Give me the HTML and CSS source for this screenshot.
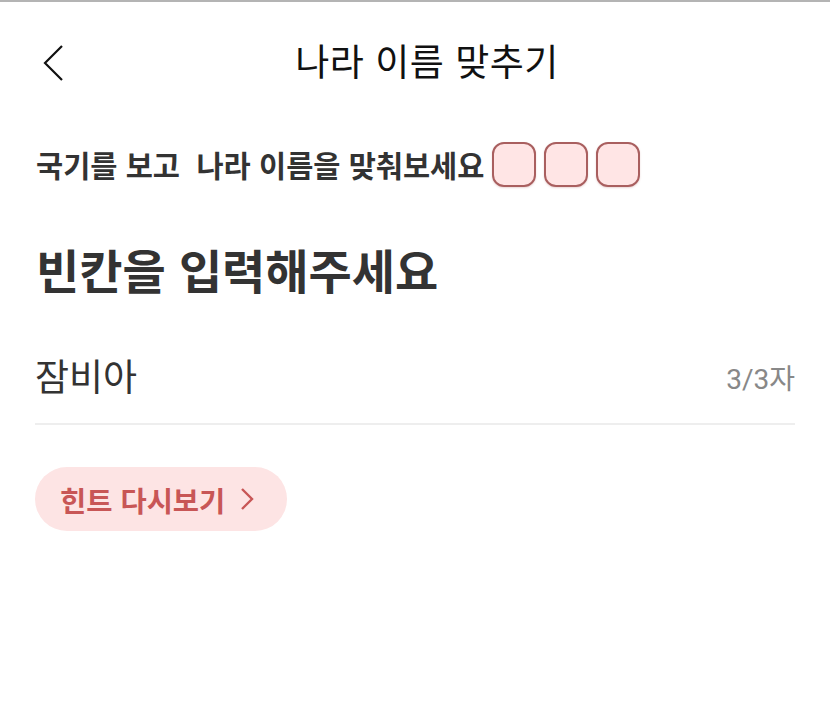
FILE: index.html
```html
<!DOCTYPE html>
<html lang="ko">
<head>
<meta charset="utf-8">
<link rel="stylesheet" href="styles.css">
</head>
<body>
<div class="page">
  <header class="topbar">
    <svg class="back" width="24" height="40" viewBox="0 0 24 40"><path d="M21 3 L4 20 L21 37" fill="none" stroke="#111" stroke-width="2.2"/></svg>
    <h1 class="title">나라 이름 맞추기</h1>
  </header>
  <section class="question">
    <span class="q-text">국기를 보고&nbsp; 나라 이름을 맞춰보세요</span>
    <span class="slots"><span class="slot"></span><span class="slot"></span><span class="slot"></span></span>
  </section>
  <h2 class="heading">빈칸을 입력해주세요</h2>
  <div class="field">
    <span class="value">잠비아</span>
    <span class="count">3/3자</span>
  </div>
  <button class="hint">힌트 다시보기 <svg width="16" height="24" viewBox="0 0 16 24"><path d="M3 2 L13 12 L3 22" fill="none" stroke="#c85656" stroke-width="2.4"/></svg></button>
</div>
</body>
</html>
```
FILE: styles.css
```css
html, body { margin: 0; padding: 0; background: #fff; }
body { font-family: "Noto Sans CJK KR", "Noto Sans", sans-serif; color: #333; }
.page { width: 830px; height: 719px; border-top: 2px solid #b4b4b4; box-sizing: border-box; padding: 0 35px 0 35px; }
.topbar { position: relative; height: 120px; display: flex; align-items: center; justify-content: center; margin-top: -2px; }
.back { position: absolute; left: 6px; top: 43px; }
.title { margin: 0; font-size: 37px; font-weight: 400; color: #111; letter-spacing: 0.5px; line-height: 1; position: relative; top: 0; left: 12px; }
.question { display: flex; align-items: center; gap: 8px; height: 50px; margin-top: 19px; }
.q-text { font-size: 29.5px; font-weight: 700; color: #333; letter-spacing: 0; padding-left: 1px; }
.slots { display: flex; gap: 8px; }
.slot { width: 44px; height: 45px; box-sizing: border-box; border: 2px solid #a95f5f; border-radius: 12px; background: #ffe5e5; box-shadow: 0 1px 2px rgba(170, 90, 90, 0.25); }
.heading { margin: 56px 0 0 1px; font-size: 47px; font-weight: 700; color: #333; letter-spacing: 0; line-height: 1; }
.field { display: flex; justify-content: space-between; align-items: center; margin-top: 36px; border-bottom: 2px solid #eeeeee; box-sizing: border-box; height: 97px; padding-top: 0; }
.value { font-size: 37px; color: #333; line-height: 1; }
.count { font-size: 28px; color: #888; line-height: 1; font-family: "Roboto", "Noto Sans CJK KR", sans-serif; position: relative; top: 4px; }
.hint { margin-top: 42px; height: 64px; padding: 0 32px 0 25px; border: none; border-radius: 32px; background: #fde4e4; color: #c85656; font-family: "Noto Sans CJK KR", sans-serif; font-size: 28.5px; font-weight: 700; display: flex; align-items: center; gap: 14px; letter-spacing: 0; }
```
